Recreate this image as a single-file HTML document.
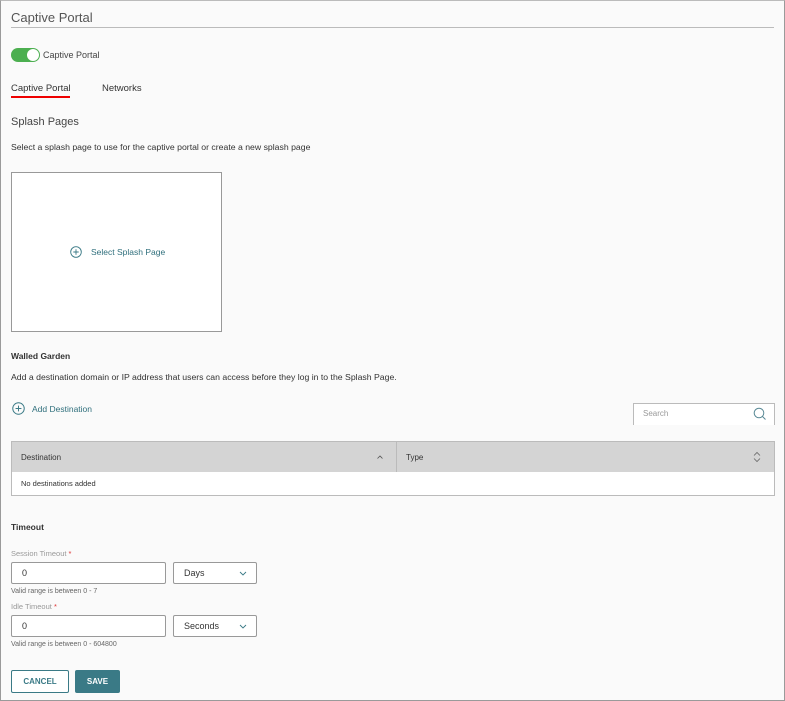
<!DOCTYPE html>
<html><head><style>
*{box-sizing:border-box;margin:0;padding:0}
body{width:785px;height:701px;background:#fafafa;font-family:"Liberation Sans",sans-serif;color:#333;position:relative;overflow:hidden}
.frame{position:absolute;left:0;top:0;width:785px;height:701px;border:1px solid #9a9a9a;border-top-color:#bbb}
.a{position:absolute;white-space:nowrap}
.inp{position:absolute;background:#fff;border:1px solid #999;border-radius:2px;font-size:9px;padding-left:10px;line-height:21px}
.chev{position:absolute;right:8px;top:5px}
</style></head><body>
<div class="frame"></div>
<div class="a" style="left:11px;top:10px;font-size:13px;color:#555">Captive Portal</div>
<div class="a" style="left:11px;top:27px;width:763px;height:1px;background:#bbb"></div>
<div class="a" style="left:11px;top:48px;width:29px;height:14px;border-radius:7px;background:#4caf50"></div>
<div class="a" style="left:27px;top:49px;width:12px;height:12px;border-radius:6px;background:#fff"></div>
<div class="a" style="left:43px;top:50px;font-size:9px;color:#444">Captive Portal</div>
<div class="a" style="left:11px;top:83px;font-size:9.5px;color:#333">Captive Portal</div>
<div class="a" style="left:11px;top:96px;width:59px;height:2px;background:#e00"></div>
<div class="a" style="left:102px;top:83px;font-size:9.5px;color:#333">Networks</div>
<div class="a" style="left:11px;top:116px;font-size:11px;color:#444">Splash Pages</div>
<div class="a" style="left:11px;top:142px;font-size:8.7px;color:#333">Select a splash page to use for the captive portal or create a new splash page</div>
<div class="a" style="left:11px;top:172px;width:211px;height:160px;background:#fff;border:1px solid #999"></div>
<svg class="a" style="left:70px;top:246px" width="12" height="12" viewBox="0 0 12 12"><circle cx="6" cy="6" r="5.3" fill="none" stroke="#3a7a86" stroke-width="0.9"/><path d="M6 3.3v5.4M3.3 6h5.4" stroke="#3a7a86" stroke-width="0.9"/></svg>
<div class="a" style="left:91px;top:247px;font-size:8.5px;color:#2f6f7c">Select Splash Page</div>
<div class="a" style="left:11px;top:351px;font-size:8.5px;font-weight:bold;color:#333">Walled Garden</div>
<div class="a" style="left:11px;top:372px;font-size:8.7px;color:#333">Add a destination domain or IP address that users can access before they log in to the Splash Page.</div>
<svg class="a" style="left:12px;top:402px" width="13" height="13" viewBox="0 0 12 12"><circle cx="6" cy="6" r="5.3" fill="none" stroke="#3a7a86" stroke-width="0.9"/><path d="M6 3.3v5.4M3.3 6h5.4" stroke="#3a7a86" stroke-width="0.9"/></svg>
<div class="a" style="left:32px;top:404px;font-size:8.5px;color:#2f6f7c">Add Destination</div>
<div class="a" style="left:633px;top:403px;width:142px;height:22px;background:#fff;border:1px solid #bbb;border-bottom:none"></div>
<div class="a" style="left:643px;top:409px;font-size:8px;color:#999">Search</div>
<svg class="a" style="left:753px;top:407px" width="14" height="14" viewBox="0 0 14 14"><circle cx="6" cy="6" r="4.8" fill="none" stroke="#5a8a96" stroke-width="1"/><path d="M9.5 9.5l3 3" stroke="#5a8a96" stroke-width="1"/></svg>
<div class="a" style="left:11px;top:441px;width:764px;height:55px;background:#fff;border:1px solid #bbb"></div>
<div class="a" style="left:12px;top:442px;width:762px;height:30px;background:#d4d4d4"></div>
<div class="a" style="left:396px;top:442px;width:1px;height:30px;background:#bbb"></div>
<div class="a" style="left:21px;top:453px;font-size:8px;color:#333">Destination</div>
<svg class="a" style="left:376px;top:454px" width="8" height="6" viewBox="0 0 8 6"><path d="M1.5 4.5L4 2 6.5 4.5" fill="none" stroke="#555" stroke-width="0.8"/></svg>
<div class="a" style="left:406px;top:453px;font-size:8px;color:#333">Type</div>
<svg class="a" style="left:753px;top:451px" width="8" height="12" viewBox="0 0 8 12"><path d="M1 4.5L4 1.5 7 4.5M1 7.5L4 10.5 7 7.5" fill="none" stroke="#666" stroke-width="0.8"/></svg>
<div class="a" style="left:21px;top:479px;font-size:7.5px;color:#333">No destinations added</div>
<div class="a" style="left:11px;top:522px;font-size:8.5px;font-weight:bold;color:#333">Timeout</div>
<div class="a" style="left:11px;top:549px;font-size:7.5px;color:#999">Session Timeout <span style="color:#d33">*</span></div>
<div class="inp" style="left:11px;top:562px;width:155px;height:22px">0</div>
<div class="inp" style="left:173px;top:562px;width:84px;height:22px">Days<svg class="chev" width="10" height="10" viewBox="0 0 10 10"><path d="M2 4l3 3 3-3" fill="none" stroke="#3a7a86" stroke-width="0.9"/></svg></div>
<div class="a" style="left:11px;top:588px;font-size:7px;color:#666">Valid range is between 0 - 7</div>
<div class="a" style="left:11px;top:602px;font-size:7.5px;color:#999">Idle Timeout <span style="color:#d33">*</span></div>
<div class="inp" style="left:11px;top:615px;width:155px;height:22px">0</div>
<div class="inp" style="left:173px;top:615px;width:84px;height:22px">Seconds<svg class="chev" width="10" height="10" viewBox="0 0 10 10"><path d="M2 4l3 3 3-3" fill="none" stroke="#3a7a86" stroke-width="0.9"/></svg></div>
<div class="a" style="left:11px;top:641px;font-size:7px;color:#666">Valid range is between 0 - 604800</div>
<div class="a" style="left:11px;top:670px;width:58px;height:23px;border:1px solid #3a7a86;border-radius:2px;background:#fff;font-size:8px;font-weight:bold;color:#3a7a86;text-align:center;line-height:21px">CANCEL</div>
<div class="a" style="left:75px;top:670px;width:45px;height:23px;border-radius:2px;background:#3a7a86;font-size:8px;font-weight:bold;color:#fff;text-align:center;line-height:23px">SAVE</div>
</body></html>
